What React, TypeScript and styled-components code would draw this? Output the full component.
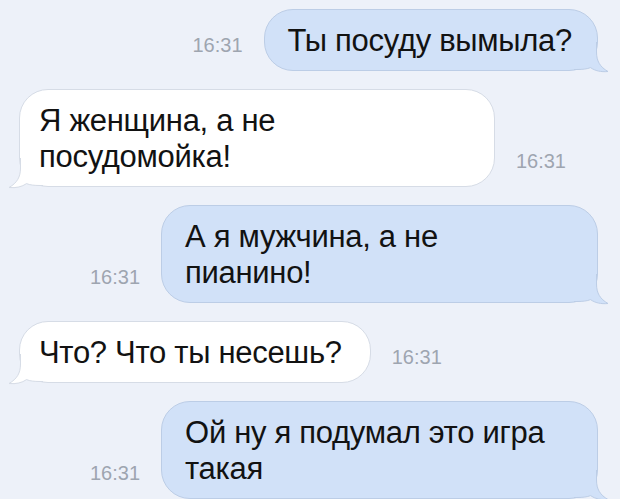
import React from 'react';
import styled, { createGlobalStyle, css } from 'styled-components';

type Side = 'out' | 'in';

interface Message {
  id: number;
  side: Side;
  lines: string[];
  time: string;
  wide?: boolean;
}

const messages: Message[] = [
  { id: 1, side: 'out', lines: ['Ты посуду вымыла?'], time: '16:31' },
  { id: 2, side: 'in', lines: ['Я женщина, а не', 'посудомойка!'], time: '16:31', wide: true },
  { id: 3, side: 'out', lines: ['А я мужчина, а не', 'пианино!'], time: '16:31', wide: true },
  { id: 4, side: 'in', lines: ['Что? Что ты несешь?'], time: '16:31' },
  { id: 5, side: 'out', lines: ['Ой ну я подумал это игра', 'такая'], time: '16:31', wide: true },
];

const palette = {
  page: '#edf1f9',
  out: '#d1e1f8',
  outBorder: '#bccde6',
  in: '#ffffff',
  inBorder: '#d6dce6',
  time: '#9ea5b0',
  text: '#121212',
};

const GlobalStyle = createGlobalStyle`
  html, body {
    margin: 0;
    padding: 0;
    background: ${palette.page};
  }
  body {
    font-family: "Liberation Sans", Arial, sans-serif;
  }
`;

const Tail: React.FC<{ side: Side }> = ({ side }) => {
  const fill = side === 'out' ? palette.out : palette.in;
  const stroke = side === 'out' ? palette.outBorder : palette.inBorder;
  return (
    <TailSvg $side={side} width="36" height="32" viewBox="0 0 36 32">
      <path
        d="M0 0 H22.5 V10 C22.5 19 26 25 34 29.5 C27 30.2 21 28.8 16.5 25.6 C13 27 9 27.5 3 27.5 H0 Z"
        fill={fill}
      />
      <path
        d="M22.5 0 V10 C22.5 19 26 25 34 29.5 C27 30.2 21 28.8 16.5 25.6 C13 27 9 27.5 3 27.5 H0"
        fill="none"
        stroke={stroke}
        strokeWidth="1"
      />
    </TailSvg>
  );
};

const App: React.FC = () => {
  return (
    <>
      <GlobalStyle />
      <Chat>
        {messages.map((m) => (
          <Row key={m.id} $side={m.side} $wide={m.wide}>
            {m.side === 'out' && <Time>{m.time}</Time>}
            <Bubble $side={m.side} $wide={m.wide}>
              <Tail side={m.side} />
              {m.lines.map((line, i) => (
                <Line key={i}>{line}</Line>
              ))}
            </Bubble>
            {m.side === 'in' && <Time>{m.time}</Time>}
          </Row>
        ))}
      </Chat>
    </>
  );
};

export default App;

const Chat = styled.div`
  width: 620px;
  height: 499px;
  box-sizing: border-box;
  padding: 9px 22px 0 19px;
  display: flex;
  flex-direction: column;
  gap: 18px;
  overflow: hidden;
  background: ${palette.page};
`;

const Row = styled.div<{ $side: Side; $wide?: boolean }>`
  display: flex;
  align-items: flex-end;
  gap: 21px;
  justify-content: ${({ $side }) => ($side === 'out' ? 'flex-end' : 'flex-start')};

  ${({ $side, $wide }) =>
    $wide &&
    ($side === 'out'
      ? css`
          padding-left: 71px;
        `
      : css`
          padding-right: 32px;
        `)}
`;

const Bubble = styled.div<{ $side: Side; $wide?: boolean }>`
  position: relative;
  box-sizing: border-box;
  padding: ${({ $side }) => ($side === 'out' ? '13px 25px 11px 23px' : '13px 28px 11px 19px')};
  border-radius: 29px;
  background: ${({ $side }) => ($side === 'out' ? palette.out : palette.in)};
  border: 1px solid ${({ $side }) => ($side === 'out' ? palette.outBorder : palette.inBorder)};
  color: ${palette.text};
  font-size: 31px;
  letter-spacing: -0.3px;
  line-height: 36px;
  ${({ $wide }) =>
    $wide &&
    css`
      flex: 1;
    `}
`;

const Line = styled.div`
  position: relative;
  white-space: nowrap;
`;

const TailSvg = styled.svg<{ $side: Side }>`
  position: absolute;
  bottom: -4px;
  display: block;
  ${({ $side }) =>
    $side === 'out'
      ? css`
          right: -13px;
        `
      : css`
          left: -13px;
          transform: scaleX(-1);
        `}
`;

const Time = styled.div`
  flex: none;
  margin-bottom: 16px;
  font-size: 20px;
  line-height: 20px;
  color: ${palette.time};
`;
